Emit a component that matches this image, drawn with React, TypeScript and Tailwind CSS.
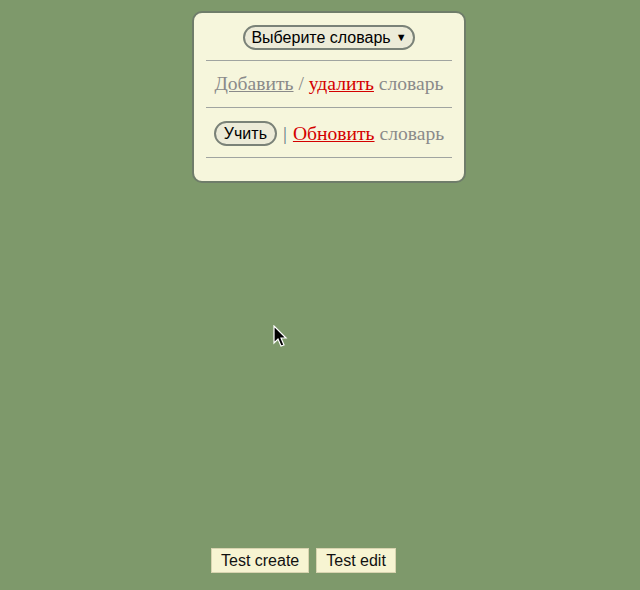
export default function App() {
  return (
    <div className="relative flex min-h-[590px] flex-col justify-between bg-[#7e996b] pb-[17px]">
      <div className="pl-[192px] pt-[11px]">
        <div className="w-[274px] rounded-[10px] border-2 border-[#6f7d6a] bg-[#f6f6dc] px-[12px] pb-[23px] pt-[12px] text-center">
          <div className="flex justify-center pb-[10px]">
            <button className="flex h-[25px] items-center gap-[5px] rounded-full border-2 border-[#7a8278] bg-[#ecebd8] pl-[6px] pr-[6px] font-['Liberation_Sans',sans-serif] text-[16px] text-black">
              <span>Выберите словарь</span>
              <span className="text-[11px]">▼</span>
            </button>
          </div>
          <div className="h-px bg-[#a0a4a0]" />
          <div className="py-[11px] font-['Liberation_Serif',serif] text-[19.6px] leading-[24px] text-[#8a8a8a]">
            <span className="underline">Добавить</span> / <span className="text-[#d40000] underline">удалить</span> словарь
          </div>
          <div className="h-px bg-[#a0a4a0]" />
          <div className="flex items-center justify-center gap-[6px] pb-[11px] pt-[13px] font-['Liberation_Serif',serif] text-[19.6px] leading-[24px] text-[#8a8a8a]">
            <button className="h-[25px] rounded-full border-2 border-[#7a8278] bg-[#ecebd8] px-[8px] font-['Liberation_Sans',sans-serif] text-[16px] leading-[20px] text-black">
              Учить
            </button>
            <span className="text-[#5f7585]">|</span>
            <span>
              <span className="text-[#d40000] underline">Обновить</span> словарь
            </span>
          </div>
          <div className="h-px bg-[#a0a4a0]" />
        </div>
      </div>

      <svg className="absolute left-[273px] top-[325px]" width="16" height="24" viewBox="0 0 16 24">
        <path d="M1 1 L1 18 L5 14 L8 21 L11 20 L8 13 L13 13 Z" fill="#000" stroke="#fff" strokeWidth="1.2" />
      </svg>

      <div className="flex gap-[7px] pl-[211px] font-['Liberation_Sans',sans-serif] text-[16px]">
        <button className="h-[25px] border border-[#d8d4b0] bg-[#f7f4d2] px-[9px] text-[#111]">Test create</button>
        <button className="h-[25px] border border-[#d8d4b0] bg-[#f7f4d2] px-[9px] text-[#111]">Test edit</button>
      </div>
    </div>
  );
}
